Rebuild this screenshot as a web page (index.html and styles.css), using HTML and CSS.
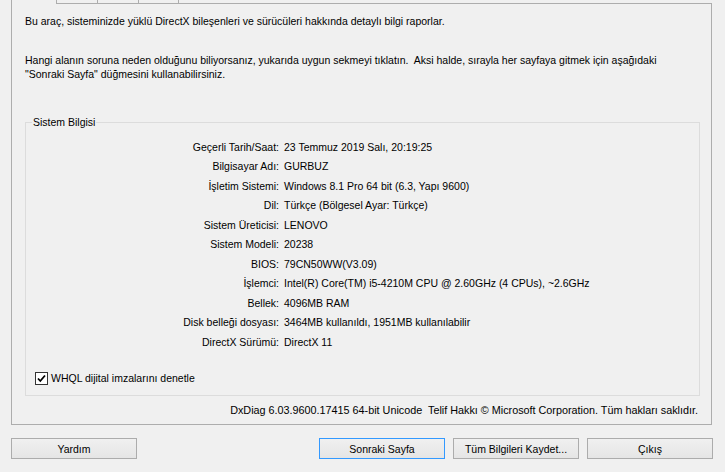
FILE: index.html
```html
<!DOCTYPE html>
<html lang="tr">
<head>
    <meta charset="UTF-8">
    <title>DirectX Tanı Aracı</title>
    <link rel="stylesheet" href="styles.css">
</head>
<body>
    <div class="tabs">
        <div class="tab active"></div>
        <div class="tab t2"></div>
        <div class="tab t3"></div>
        <div class="tab t4"></div>
        <div class="tab-fill"></div>
    </div>
    <div class="panel">
        <p class="intro">Bu araç, sisteminizde yüklü DirectX bileşenleri ve sürücüleri hakkında detaylı bilgi raporlar.</p>
        <p class="intro second">Hangi alanın soruna neden olduğunu biliyorsanız, yukarıda uygun sekmeyi tıklatın.&nbsp; Aksi halde, sırayla her sayfaya gitmek için aşağıdaki<br>"Sonraki Sayfa" düğmesini kullanabilirsiniz.</p>

        <fieldset class="group">
            <legend>Sistem Bilgisi</legend>
            <div class="info">
                <span class="label">Geçerli Tarih/Saat:</span><span>23 Temmuz 2019 Salı, 20:19:25</span>
                <span class="label">Bilgisayar Adı:</span><span>GURBUZ</span>
                <span class="label">İşletim Sistemi:</span><span>Windows 8.1 Pro 64 bit (6.3, Yapı 9600)</span>
                <span class="label">Dil:</span><span>Türkçe (Bölgesel Ayar: Türkçe)</span>
                <span class="label">Sistem Üreticisi:</span><span>LENOVO</span>
                <span class="label">Sistem Modeli:</span><span>20238</span>
                <span class="label">BIOS:</span><span>79CN50WW(V3.09)</span>
                <span class="label">İşlemci:</span><span>Intel(R) Core(TM) i5-4210M CPU @ 2.60GHz (4 CPUs), ~2.6GHz</span>
                <span class="label">Bellek:</span><span>4096MB RAM</span>
                <span class="label">Disk belleği dosyası:</span><span>3464MB kullanıldı, 1951MB kullanılabilir</span>
                <span class="label">DirectX Sürümü:</span><span>DirectX 11</span>
            </div>
            <label class="check">
                <svg width="13" height="13" viewBox="0 0 13 13">
                    <rect x="0.5" y="0.5" width="12" height="12" fill="#fff" stroke="#333"/>
                    <path d="M3 6.5 L5.3 9 L10 3.5" fill="none" stroke="#000" stroke-width="1.8"/>
                </svg>
                <span>WHQL dijital imzalarını denetle</span>
            </label>
        </fieldset>

        <p class="version">DxDiag 6.03.9600.17415 64-bit Unicode&nbsp; Telif Hakkı © Microsoft Corporation. Tüm hakları saklıdır.</p>
    </div>
    <div class="buttons">
        <button>Yardım</button>
        <div class="spacer"></div>
        <button class="default">Sonraki Sayfa</button>
        <button>Tüm Bilgileri Kaydet...</button>
        <button>Çıkış</button>
    </div>
</body>
</html>
```

FILE: styles.css
```css
body {
    margin: 0;
    background-color: #f0f0f0;
    color: #000;
    font-family: 'Liberation Sans', Arial, sans-serif;
    font-size: 10.5px;
    line-height: 14px;
}
.tabs {
    display: flex;
    margin-left: 11px;
    width: 701px;
    height: 4px;
}
.tab {
    box-sizing: border-box;
    height: 4px;
    border-right: 1px solid #adadad;
    border-bottom: 1px solid #adadad;
}
.tab.active {
    width: 46px;
    border-left: 1px solid #adadad;
    border-bottom: none;
}
.tab.t2,
.tab.t3 {
    width: 41px;
}
.tab.t4 {
    width: 40px;
}
.tab-fill {
    flex: 1;
    border-bottom: 1px solid #adadad;
}
.panel {
    box-sizing: border-box;
    margin-left: 11px;
    width: 701px;
    height: 421px;
    border: 1px solid #adadad;
    border-top: none;
    padding-top: 10px;
    display: flex;
    flex-direction: column;
}
.intro {
    margin: 0 0 0 13px;
}
.intro.second {
    margin-top: 25px;
}
.group {
    margin: 34px 0 0 13px;
    padding: 0 0 10px 0;
    width: 675px;
    box-sizing: border-box;
    border: 1px solid #dcdcdc;
}
.group legend {
    margin-left: 6px;
    padding: 0 1px;
}
.info {
    display: grid;
    grid-template-columns: 253px auto;
    column-gap: 5px;
    grid-auto-rows: 19.5px;
    align-items: center;
    margin-top: 8px;
}
.info .label {
    text-align: right;
}
.check {
    display: flex;
    align-items: center;
    gap: 3px;
    margin: 19.5px 0 0 9px;
}
.check svg {
    display: block;
}
.version {
    margin: auto 13px 7px 0;
    text-align: right;
    font-size: 10.8px;
}
.buttons {
    display: flex;
    gap: 8px;
    margin: 13px 12px 0 11px;
}
.spacer {
    flex: 1;
}
.buttons button {
    box-sizing: border-box;
    width: 126px;
    height: 21px;
    padding: 0;
    font-family: inherit;
    font-size: 10.5px;
    color: #000;
    background: linear-gradient(#f0f0f0, #e5e5e5);
    border: 1px solid #acacac;
    border-radius: 0;
}
.buttons button.default {
    border-color: #3399ff;
}
```
